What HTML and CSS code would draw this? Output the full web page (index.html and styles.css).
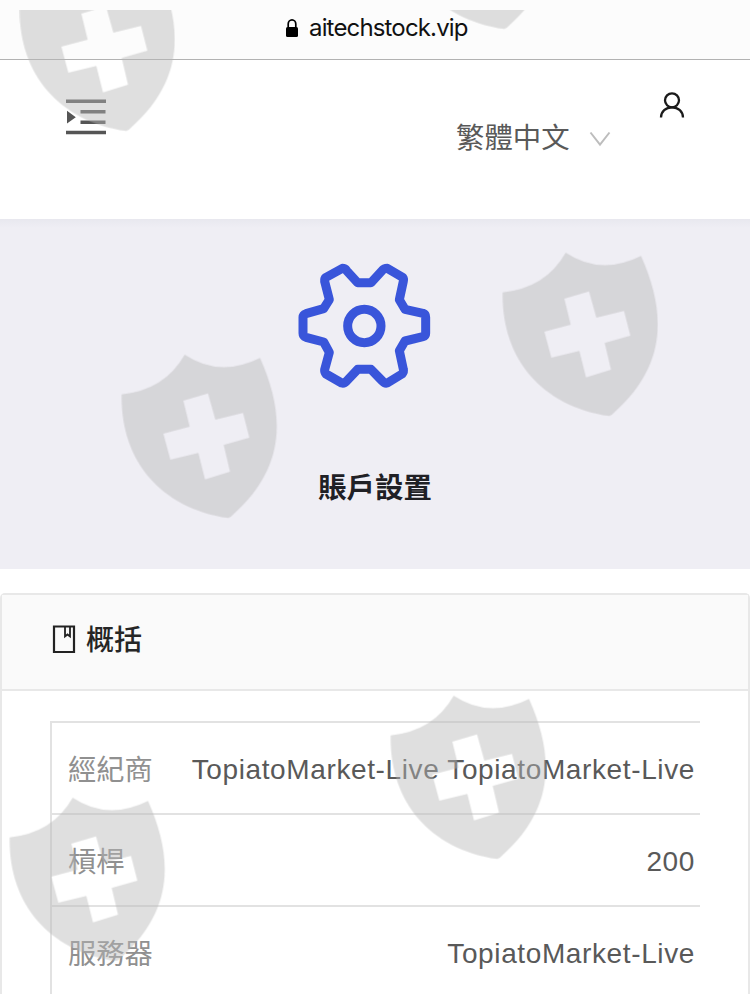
FILE: index.html
```
<!DOCTYPE html>
<html lang="zh-Hant">
<head>
<meta charset="utf-8">
<title>賬戶設置</title>
<link rel="stylesheet" href="styles.css">
</head>
<body>
<div class="address">
  <svg class="lock" width="14" height="20" viewBox="0 0 14 20"><path d="M3.2 9.500V6a3.800 4.200 0 0 1 7.600 0V9.500" fill="none" stroke="#000" stroke-width="1.700"/><rect x="1" y="9" width="12" height="10" rx="1.500"/></svg>
  <span class="domain">aitechstock.vip</span>
</div>
<header class="header">
  <svg class="menu" width="40" height="36" viewBox="0 0 40 36" fill="#555"><path d="M0 .6h40v3.400H0zM14.500 11h25v3.400h-25zM14.500 21.500h25v3.400h-25zM0 31.800h40v3.400H0zM1 11.700l8.800 6.500L1 24.500z"/></svg>
  <div class="language"><span>繁體中文</span>
    <svg class="chevron" width="22" height="16" viewBox="0 0 22 16"><path d="M1.500 1.500l9.500 12.200 9.500-12.200" fill="none" stroke="#bdbdbd" stroke-width="2"/></svg>
  </div>
  <svg class="user" width="26" height="27" viewBox="0 0 26 27" fill="none" stroke="#1a1a1a" stroke-width="2.300"><circle cx="13" cy="8.300" r="7"/><path d="M2 25.500c0-6 4.800-10.200 11-10.200s11 4.200 11 10.200"/></svg>
</header>
<section class="banner">
  <svg class="gear" width="150" height="150" viewBox="0 0 450 450" fill="none" stroke="#3955da" stroke-width="27" stroke-linejoin="round"><path d="M157 55Q165 55 170 62L203 98H243L276 62Q282 55 292 55L338 82Q342 87 340 94L328 149L345 178L399 190Q407 193 407 202V250Q407 258 399 260L345 273L328 302L340 358Q342 365 336 372L292 399Q284 401 277 393L243 358H203L170 393Q163 401 155 399L108 372Q103 367 104 359L118 307L101 276L48 262Q39 259 39 250V202Q39 194 48 191L101 176L118 149L104 94Q103 86 108 82Z"/><circle cx="223" cy="228" r="50"/></svg>
  <h1>賬戶設置</h1>
</section>
<main class="card">
  <div class="card-head">
    <svg width="24" height="30" viewBox="0 0 24 30" fill="none" stroke="#222"><path d="M2 1.500h20v25.500H2z" stroke-width="2.200"/><path d="M13 1.500v10l2.500-2 2.500 2v-10" stroke-width="1.800"/></svg>
    <h2>概括</h2>
  </div>
  <dl class="details">
    <div class="row"><dt>經紀商</dt><dd>TopiatoMarket-Live TopiatoMarket-Live</dd></div>
    <div class="row"><dt>槓桿</dt><dd>200</dd></div>
    <div class="row"><dt>服務器</dt><dd>TopiatoMarket-Live</dd></div>
  </dl>
</main>
<svg class="watermark" width="750" height="984" viewBox="0 10 750 984" aria-hidden="true">
  <defs><path id="shield" fill-rule="evenodd" d="M38 157Q167 144 227 38Q332 108 453 48C530 220 530 378 371 519Q365 527 358 528C150 497 34 350 38 157ZM223 176L297 154L319 233L402 213L421 287L344 309L363 389L288 412L268 333L184 353L163 275L242 254Z"/></defs>
  <g class="shields">
    <use href="#shield" transform="translate(7 -45) scale(.33333)"/>
    <use href="#shield" transform="translate(385 -147) scale(.33333)"/>
    <use href="#shield" transform="translate(490 240) scale(.33333)"/>
    <use href="#shield" transform="translate(109 342) scale(.33333)"/>
    <use href="#shield" transform="translate(378 683) scale(.33333)"/>
    <use href="#shield" transform="translate(-3 785) scale(.33333)"/>
  </g>
</svg>
</body>
</html>
```
FILE: styles.css
```
* { box-sizing: border-box; }
body {
  margin: 0;
  height: 994px;
  position: relative;
  overflow: hidden;
  background: #fff;
  color: #595959;
  font-family: "Liberation Sans", "Noto Sans CJK TC", sans-serif;
  font-size: 28px;
}
h1, h2, dl, dd { margin: 0; }
svg { display: block; flex: none; }
.address {
  height: 60px;
  padding: 0 0 4px 285px;
  display: flex;
  align-items: center;
  gap: 10px;
  background: #fcfcfc;
  border-bottom: 1px solid #b2b2b2;
  color: #111;
  font-family: Inter, sans-serif;
  font-size: 24px;
}
.domain { letter-spacing: -.84px; }
.header {
  height: 159px;
  display: flex;
  align-items: flex-start;
  padding-left: 66px;
}
.menu { margin-top: 39px; }
.language {
  display: flex;
  align-items: center;
  width: 155px;
  height: 42px;
  margin: 54px 0 0 350px;
  justify-content: space-between;
  font-size: 28.400px;
}
.chevron { margin-top: 7px; }
.user { margin: 32px 0 0 48px; }
.banner {
  height: 350px;
  padding-top: 31px;
  background: linear-gradient(#e8e8ef, #efeef4 9px);
  display: flex;
  flex-direction: column;
  align-items: center;
}
.gear { margin-right: 20px; }
h1 {
  margin-top: 68px;
  color: #202025;
  font-size: 28.400px;
  line-height: 40px;
}
.card {
  height: 420px;
  margin-top: 24px;
  border: 2px solid #e8e8e8;
  border-bottom: 0;
  border-radius: 5px 5px 0 0;
}
.card-head {
  height: 96px;
  padding: 0 0 4px 50px;
  display: flex;
  align-items: center;
  gap: 10px;
  background: #fafafa;
  border-bottom: 2px solid #e8e8e8;
}
h2 {
  padding-bottom: 4px;
  color: #262626;
  font-size: 28px;
  font-weight: 500;
}
.details {
  margin: 30px 48px 0;
  border-left: 2px solid #e2e2e2;
}
.row {
  height: 92px;
  padding: 2px 5px 0 16px;
  display: flex;
  align-items: center;
  justify-content: space-between;
  border-top: 2px solid #e2e2e2;
  white-space: nowrap;
}
dt { padding-bottom: 4px; color: #909090; font-size: 28.300px; }
dd { padding-top: 2px; letter-spacing: .62px; }
.watermark {
  position: absolute;
  top: 10px;
  left: 0;
  pointer-events: none;
}
.shields { fill: #b8b8b8; opacity: .45; }
```
